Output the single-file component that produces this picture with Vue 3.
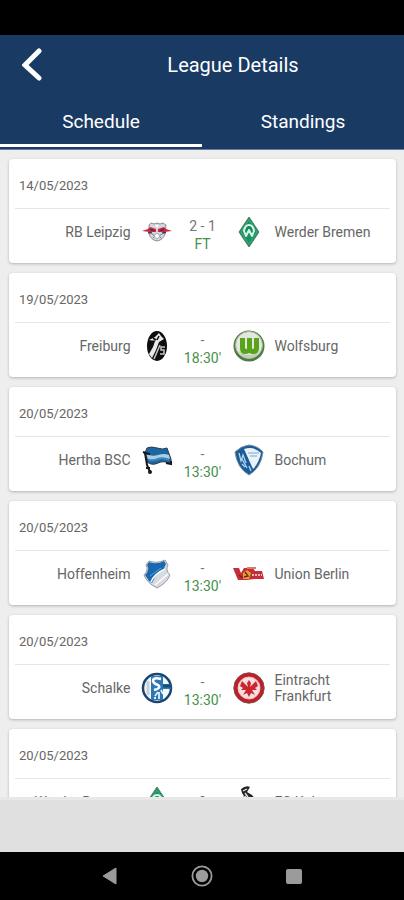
<template>
  <div class="screen">
    <div class="statusBar"></div>

    <header class="header">
      <div class="titleBar">
        <button class="back" type="button" aria-label="Back">
          <svg width="20" height="34" viewBox="0 0 20 34">
            <path d="M17 3 L3 17 L17 30" fill="none" stroke="#fff" stroke-width="5" stroke-linecap="round" stroke-linejoin="miter" />
          </svg>
        </button>
        <h1 class="title">League Details</h1>
      </div>
      <nav class="tabs">
        <button
          v-for="tab in tabs"
          :key="tab"
          type="button"
          class="tab"
          :class="{ active: tab === activeTab }"
          @click="activeTab = tab"
        >{{ tab }}</button>
      </nav>
    </header>

    <main class="list">
      <section v-for="(match, i) in matches" :key="i" class="card">
        <div class="date">{{ match.date }}</div>
        <div class="match">
          <span class="team home">{{ match.home }}</span>
          <svg class="logo" viewBox="0 0 32 32"><use :href="'#' + match.homeLogo" /></svg>
          <div class="result">
            <span class="score">{{ match.score }}</span>
            <span class="time">{{ match.time }}</span>
          </div>
          <svg class="logo" viewBox="0 0 32 32"><use :href="'#' + match.awayLogo" /></svg>
          <span class="team away">{{ match.away }}</span>
        </div>
      </section>
    </main>

    <div class="adBar"></div>

    <nav class="systemBar">
      <button type="button" aria-label="System back">
        <svg width="24" height="24" viewBox="0 0 24 24"><path d="M5 12 L18 4 V20 Z" fill="#9b9b9b" stroke="#9b9b9b" stroke-linejoin="round" /></svg>
      </button>
      <button type="button" aria-label="Home">
        <svg width="24" height="24" viewBox="0 0 24 24">
          <circle cx="12" cy="12" r="9.6" fill="none" stroke="#9b9b9b" stroke-width="1.8" />
          <circle cx="12" cy="12" r="6.2" fill="#9b9b9b" />
        </svg>
      </button>
      <button type="button" aria-label="Recent apps">
        <svg width="24" height="24" viewBox="0 0 24 24"><rect x="4" y="5" width="16" height="15" rx="2" fill="#9b9b9b" /></svg>
      </button>
    </nav>

    <svg class="defs" width="0" height="0" aria-hidden="true">
      <!-- two red bulls on a winged shield -->
      <symbol id="leipzig" viewBox="0 0 32 32">
        <path d="M8 9 L10 7 L13 8 L16 7 L19 8 L22 7 L25 9 L24 18 Q22 24 16 25 Q10 24 8 18 Z" fill="#d3d6dc" stroke="#8b8e98" />
        <path d="M1 15 L7 13 L9 11 L15 13 L15 16 L9 16 Z M31 15 L25 13 L23 11 L17 13 L17 16 L23 16 Z" fill="#cf2345" />
        <path d="M9 13.5 L13 14.500 M19 14.500 L23 13.5 M7 16.5 L11 17 M25 16.5 L21 17" stroke="#4c3547" stroke-width="1.400" />
        <path d="M11 18 L14 20 L12 22 M21 18 L18 20 L20 22" fill="none" stroke="#777d88" />
        <circle cx="16" cy="20" r="2.500" fill="#fff" stroke="#a4a8b0" />
        <path d="M14 9 L16 12 L18 9" fill="#fff" />
      </symbol>
      <symbol id="bremen" viewBox="0 0 32 32">
        <path d="M16 1 L26 16 L16 31 L6 16 Z" fill="#17935f" stroke="#4f7f6a" />
        <path d="M16 4 L24 16 L16 28 L8 16 Z" fill="none" stroke="#45a982" />
        <path d="M11 15 Q12 9 16 9 Q20 9 21 15 L19 20 L16 14 L13 20 Z" fill="#138b58" stroke="#d9f3e7" stroke-width="2" stroke-linejoin="round" />
      </symbol>
      <symbol id="freiburg" viewBox="0 0 32 32">
        <ellipse cx="16" cy="16" rx="10" ry="15" fill="#0d0d0f" />
        <path d="M8 10 L14 7 L18 3 L20 6 L23 9 L18 12 L15 20 L11 28 L8 24 L12 17 L14 11 Z" fill="#e9e9e9" />
        <path d="M12 8 L15 10 M18 6 L16 10 M10 12 L14 11" stroke="#111" stroke-width="1.600" />
        <path d="M19 15 L13 29 M24 17 H20 V20 H23 V24 H19" fill="none" stroke="#c4c4c4" stroke-width="1.500" />
      </symbol>
      <symbol id="wolfsburg" viewBox="0 0 32 32">
        <circle cx="16" cy="16" r="15.500" fill="#4d7d3f" />
        <circle cx="16" cy="15" r="13.500" fill="#e2e8e0" stroke="#a9b5a5" />
        <path d="M5 19 Q8 28 16 28 Q24 28 27 19 Q24 25 16 25 Q8 25 5 19 Z" fill="#c0ccbc" />
        <path d="M7 8 H12 V18 Q12 19 14 19 V8 H19 V19 Q21 19 21 18 V8 H26 V18 Q26 24 20 24 Q18 24 16 23 Q15 24 12 24 Q7 24 7 18 Z" fill="#58a51c" />
      </symbol>
      <!-- flag on a pole -->
      <symbol id="hertha" viewBox="0 0 32 32">
        <path d="M6 4 Q10 2 16 4 T26 4 L30 15 L30 20 Q23 16 17 19 T6 18 L4 9 Z" fill="#1c66a3" stroke="#253c4e" />
        <path d="M5 10 Q11 13 17 11 T28 11 L29 15 Q22 13 17 15 T7 15 Z" fill="#a9cfe6" />
        <path d="M8 16 Q12 17 17 15 T28 16" fill="none" stroke="#4384b2" stroke-width="2" />
        <path d="M2 8 Q7 10 9 10 M4 9 L6 21 L9 28 M25 19 L30 20 V17" fill="none" stroke="#17191d" stroke-width="2" />
        <circle cx="9" cy="28" r="2" fill="#17191d" />
        <path d="M5 24 H9" stroke="#17191d" stroke-width="2" />
      </symbol>
      <symbol id="bochum" viewBox="0 0 32 32">
        <path d="M16 1 Q25 2 30 8 Q28 24 16 31 Q4 24 2 8 Q8 2 16 1 Z" fill="#175c9b" stroke="#7b8b98" />
        <path d="M11 5 Q21 2 28 9 Q26 19 20 25 Z" fill="#eaf2f9" />
        <path d="M15 9 H26 M17 12 H24" stroke="#7ea6c9" />
        <path d="M6 9 L8 17 L10 11 L13 19 M9 20 L12 23 M16 22 L18 27 M9 15 L14 24" fill="none" stroke="#b9d3e8" stroke-width="1.300" />
      </symbol>
      <symbol id="hoffenheim" viewBox="0 0 32 32">
        <path d="M8 3 Q16 6 24 2 L27 7 Q24 12 29 17 Q26 25 16 30 Q6 25 3 17 Q8 12 5 7 Z" fill="#d7dbe0" stroke="#949ba2" />
        <path d="M8 4 Q16 7 23 3 L25 6 Q23 9 23 12 Q15 15 11 25 L8 23 L4 17 Q9 12 6 7 Z" fill="#1969b0" />
        <path d="M10 24 Q13 16 24 11 M14 27 L27 16" fill="none" stroke="#fff" stroke-width="1.500" />
        <path d="M9 18 L20 10" stroke="#5fa3d6" />
      </symbol>
      <symbol id="union" viewBox="0 0 32 32">
        <path d="M0 10 H6 L8 15 L11 10 H20 L22 13 H29 L31 21 H21 L14 22 H5 Z" fill="#c52d3b" />
        <path d="M14 10 H23" stroke="#cf8068" stroke-width="2" />
        <path d="M10 15 L14 12 L18 15 L16 21 L10 21 Z" fill="#dfa32a" />
        <path d="M12 14 L15 18 L11 19 M6 17 L10 20" fill="none" stroke="#7c231f" stroke-width="1.400" />
        <path d="M19 17 H29" stroke="#efb9ae" stroke-width="2" stroke-dasharray="2 1" />
      </symbol>
      <symbol id="schalke" viewBox="0 0 32 32">
        <circle cx="16" cy="16" r="14" fill="#f4f8fb" stroke="#1a456f" stroke-width="2.500" />
        <path d="M10 4 H22 V12 H30 V17 H22 V28 H10 Z" fill="#2b79b4" />
        <path d="M22 14 H30" stroke="#164d7d" stroke-width="3" />
        <path d="M20 7 Q12 5 12 9 Q13 12 17 13 Q21 16 13 18" fill="none" stroke="#fff" stroke-width="2.500" />
        <path d="M18 20 V27 M14 24 L17 20 M20 18 L22 22 M13 26 H15" stroke="#e2f0f9" stroke-width="1.800" />
        <path d="M7 9 V23" stroke="#c5d0d8" stroke-width="3" />
      </symbol>
      <symbol id="frankfurt" viewBox="0 0 32 32">
        <circle cx="16" cy="16" r="15.200" fill="#c01f28" stroke="#795055" />
        <circle cx="16" cy="16" r="11" fill="#f5dfdf" stroke="#efbcbc" />
        <path d="M16 8 L18 11 L17 15 L23 9 L25 14 L22 16 L24 18 L19 18 L22 23 L18 21 L16 25 L14 21 L10 23 L13 18 L8 18 L10 16 L7 14 L9 9 L15 15 L14 11 Z" fill="#cb2630" />
      </symbol>
      <!-- goat above a red disc -->
      <symbol id="koln" viewBox="0 0 32 32">
        <path d="M8 3 Q13 -1 17 1 L14 6 L19 9 L23 14 H7 L11 10 L9 7 Z" fill="#252525" />
        <path d="M10 5 L14 3 M12 7 L15 11 M10 12 L13 10" stroke="#e5e5e5" stroke-width="1.300" />
        <circle cx="16" cy="22" r="9" fill="#c52731" />
      </symbol>
    </svg>
  </div>
</template>

<script setup>
import { ref } from 'vue'

const tabs = ['Schedule', 'Standings']
const activeTab = ref('Schedule')

const matches = ref([
  { date: '14/05/2023', home: 'RB Leipzig', homeLogo: 'leipzig', score: '2 - 1', time: 'FT', away: 'Werder Bremen', awayLogo: 'bremen' },
  { date: '19/05/2023', home: 'Freiburg', homeLogo: 'freiburg', score: '-', time: "18:30'", away: 'Wolfsburg', awayLogo: 'wolfsburg' },
  { date: '20/05/2023', home: 'Hertha BSC', homeLogo: 'hertha', score: '-', time: "13:30'", away: 'Bochum', awayLogo: 'bochum' },
  { date: '20/05/2023', home: 'Hoffenheim', homeLogo: 'hoffenheim', score: '-', time: "13:30'", away: 'Union Berlin', awayLogo: 'union' },
  { date: '20/05/2023', home: 'Schalke', homeLogo: 'schalke', score: '-', time: "13:30'", away: 'Eintracht Frankfurt', awayLogo: 'frankfurt' },
  { date: '20/05/2023', home: 'Werder Bremen', homeLogo: 'bremen', score: '-', time: "13:30'", away: 'FC Koln', awayLogo: 'koln' }
])
</script>

<style>
body {
  margin: 0;
  background: #000;
}
</style>

<style scoped>
.screen {
  display: flex;
  flex-direction: column;
  height: 100vh;
  overflow: hidden;
  background: #eee;
  font-family: Roboto, "Liberation Sans", sans-serif;
}

button {
  padding: 0;
  border: none;
  background: none;
  font-family: inherit;
  cursor: pointer;
}

.statusBar {
  flex: none;
  height: 35px;
  background: #000;
}

.header {
  flex: none;
  padding-bottom: 2px;
  background: #193a63;
  color: #fff;
  border-bottom: 1px solid #6d7ba3;
}

.titleBar {
  display: grid;
  grid-template-columns: 64px 1fr;
  align-items: center;
  height: 60px;
}

.back {
  display: flex;
  justify-content: center;
}

.title {
  margin: 0;
  text-align: center;
  font-size: 20px;
  font-weight: 400;
  line-height: 24px;
}

.titleBar {
  padding-right: 2px;
}

.tabs {
  display: grid;
  grid-template-columns: 1fr 1fr;
}

.tab {
  height: 52px;
  padding-top: 5px;
  border-bottom: 3px solid transparent;
  color: #fff;
  font-size: 19px;
  line-height: 24px;
}

.tab.active {
  border-bottom-color: #fff;
}

.list {
  flex: 1;
  min-height: 0;
  overflow: hidden;
  display: flex;
  flex-direction: column;
  gap: 10px;
  padding: 9px 8px 0 9px;
}

.card {
  flex: none;
  background: #fff;
  border-radius: 4px;
  box-shadow: 0 1px 3px #00000040;
}

.date {
  margin: 0 6px;
  padding: 19px 4px 14px;
  border-bottom: 1px solid #e6e6e6;
  color: #666;
  font-size: 13px;
  line-height: 16px;
}

.match {
  display: grid;
  grid-template-columns: 1fr 32px 60px 32px 1fr;
  align-items: center;
  height: 46px;
  padding-bottom: 8px;
}

.team {
  color: #666;
  font-size: 14px;
  line-height: 16px;
}

.home {
  padding-right: 10px;
  text-align: right;
}

.away {
  padding: 0 24px 0 10px;
}

.logo {
  width: 32px;
  height: 32px;
}

.result {
  display: flex;
  flex-direction: column;
  padding-top: 6px;
  text-align: center;
  font-size: 14px;
  line-height: 18px;
}

.score {
  color: #777;
}

.time {
  color: #46904b;
}

.adBar {
  flex: none;
  height: 52px;
  border-top: 3px solid #e8e8e8;
  background: #e0e0e0;
}

.systemBar {
  flex: none;
  display: flex;
  justify-content: center;
  gap: 68px;
  height: 48px;
  background: #000;
}

.systemBar button {
  display: flex;
  align-items: center;
}

.defs {
  display: none;
}
</style>
